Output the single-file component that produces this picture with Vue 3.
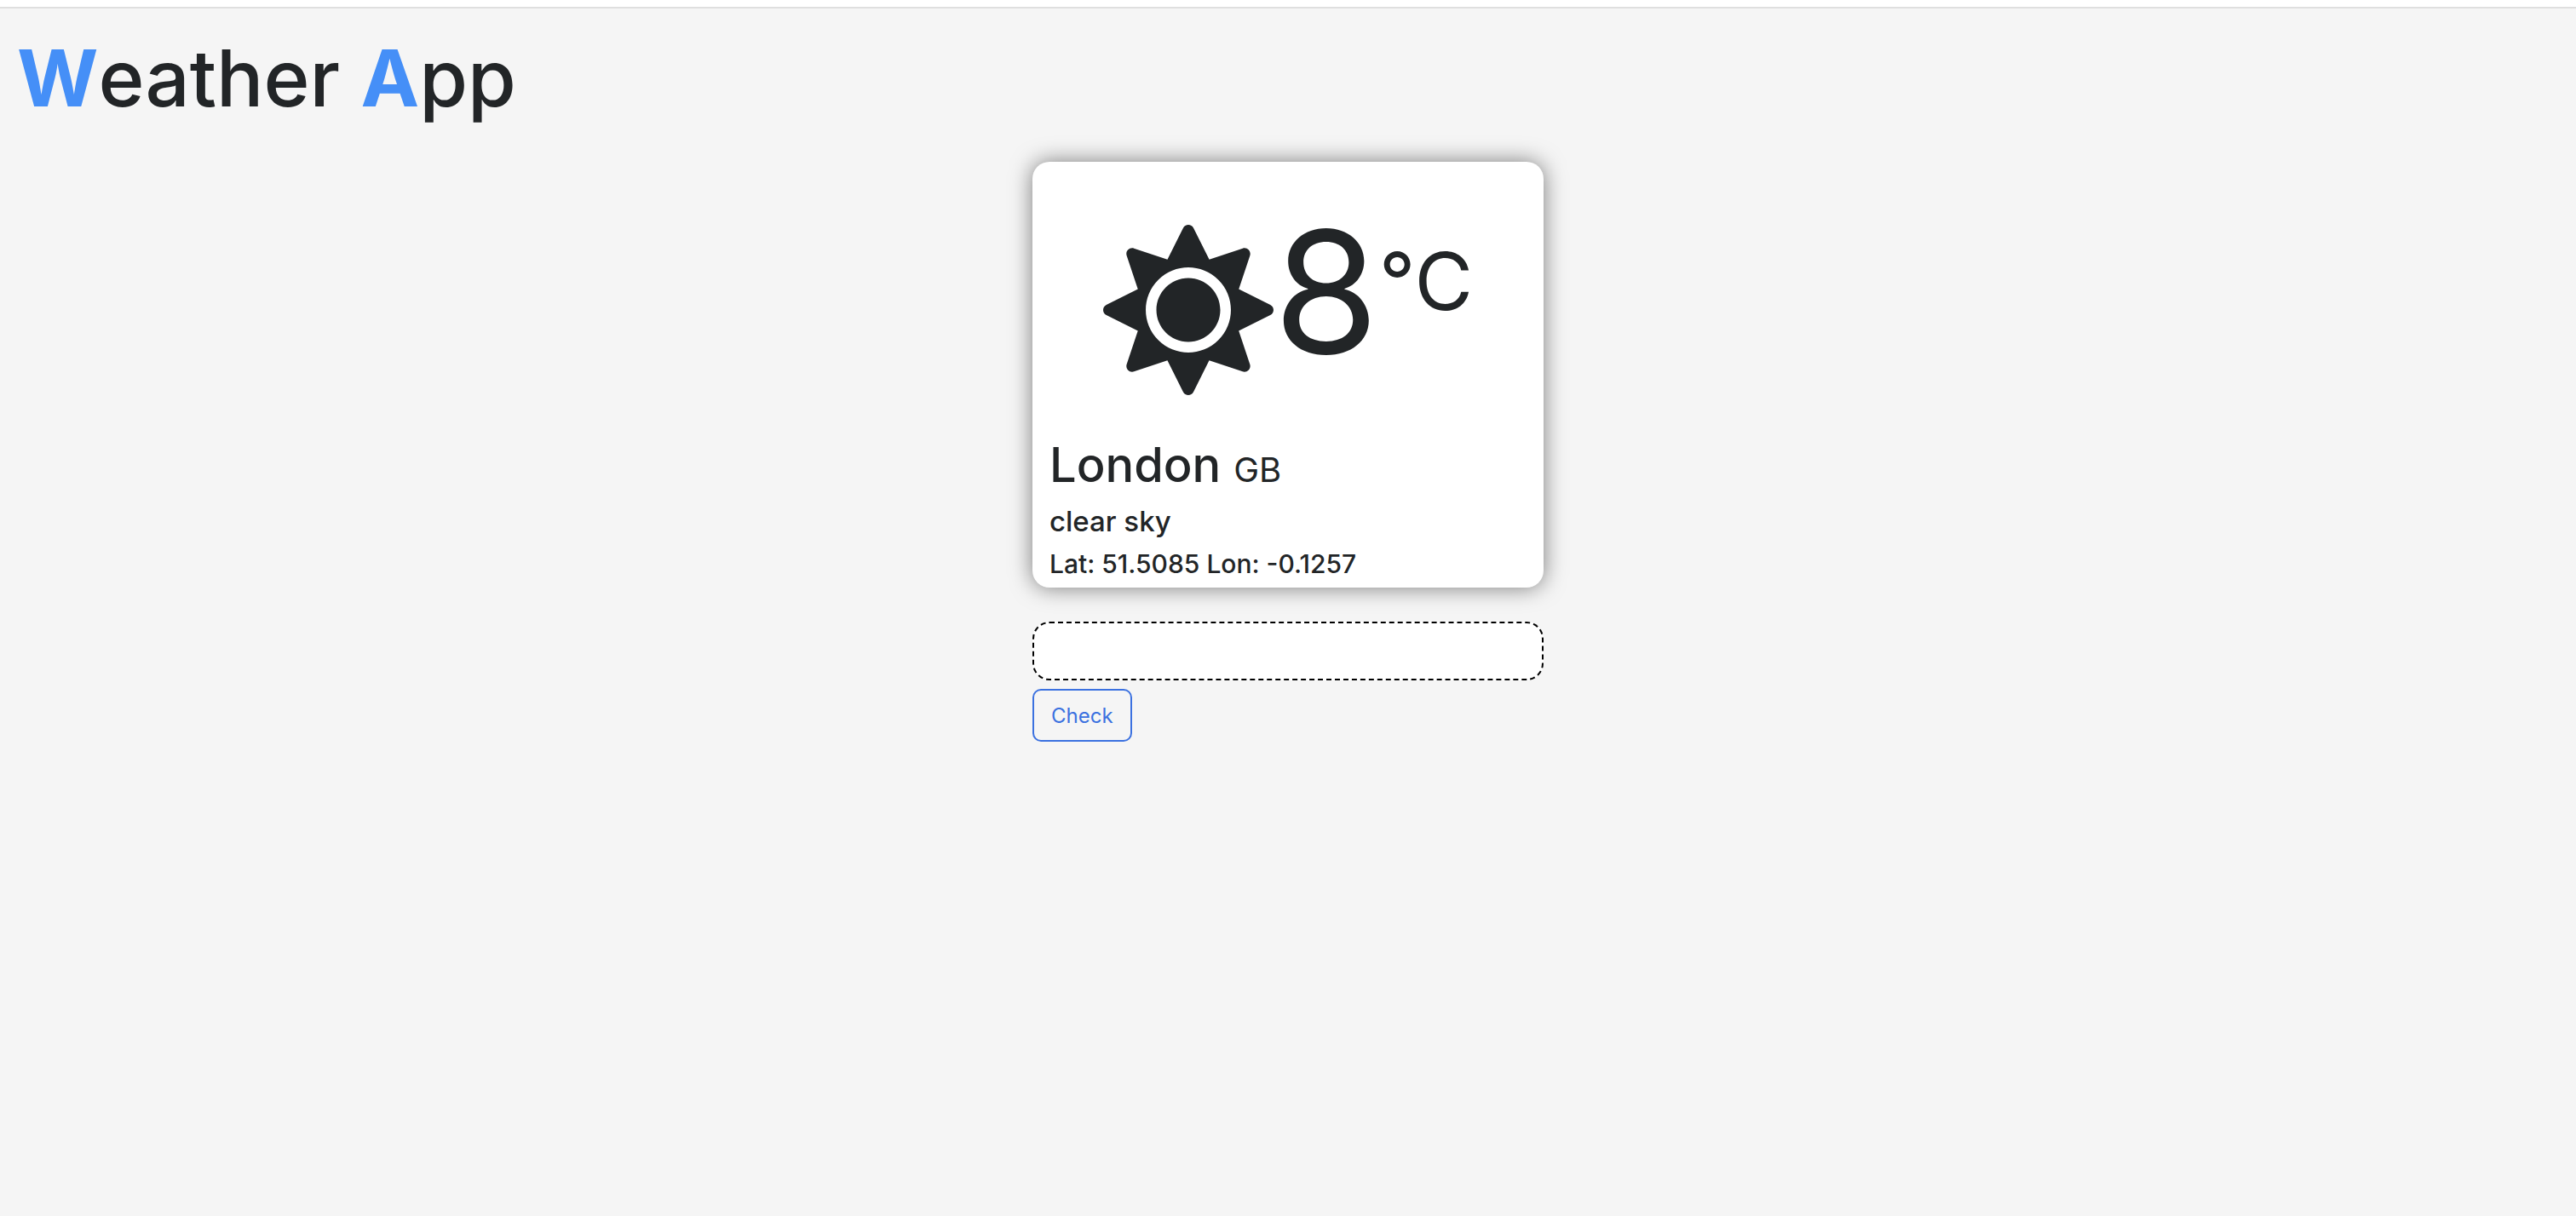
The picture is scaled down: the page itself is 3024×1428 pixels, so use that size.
<script setup>
import { ref } from 'vue'

const city = ref('')
const weather = {
  temperature: 8,
  city: 'London',
  country: 'GB',
  description: 'clear sky',
  lat: '51.5085',
  lon: '-0.1257',
}
</script>

<template>
  <div class="page">
    <header>
      <h1 class="title"><span>W</span>eather <span>A</span>pp</h1>
    </header>
    <main class="content">
      <section class="card">
        <div class="reading">
          <svg class="sun" viewBox="0 0 512 512" aria-hidden="true">
            <path
              fill="currentColor"
              d="M256 160c-52.9 0-96 43.1-96 96s43.1 96 96 96 96-43.1 96-96-43.1-96-96-96zm246.4 80.5l-94.7-47.3 33.5-100.4c4.5-13.6-8.4-26.5-21.9-21.9l-100.4 33.5-47.4-94.8c-6.4-12.8-24.6-12.8-31 0l-47.3 94.7L92.7 70.8c-13.6-4.5-26.5 8.4-21.9 21.9l33.5 100.4-94.7 47.4c-12.8 6.4-12.8 24.6 0 31l94.7 47.3-33.5 100.5c-4.5 13.6 8.4 26.5 21.9 21.9l100.4-33.5 47.3 94.7c6.4 12.8 24.6 12.8 31 0l47.3-94.7 100.4 33.5c13.6 4.5 26.5-8.4 21.9-21.9l-33.5-100.4 94.7-47.3c13-6.5 13-24.7.2-31.1zm-155.9 106c-49.9 49.9-131.1 49.9-181 0-49.9-49.9-49.9-131.1 0-181 49.9-49.9 131.1-49.9 181 0 49.9 49.9 49.9 131.1 0 181z"
            />
          </svg>
          <span class="degrees">{{ weather.temperature }}</span>
          <span class="unit">°C</span>
        </div>
        <h2 class="city">{{ weather.city }} <small>{{ weather.country }}</small></h2>
        <h3 class="description">{{ weather.description }}</h3>
        <h4 class="coords">Lat: {{ weather.lat }} Lon: {{ weather.lon }}</h4>
      </section>
      <form class="search" @submit.prevent>
        <input v-model="city" class="field" type="text" aria-label="City" />
        <button class="check" type="submit">Check</button>
      </form>
    </main>
  </div>
</template>

<style>
body {
  margin: 0;
  background: #f5f5f5;
}
</style>

<style scoped>
.page {
  box-sizing: border-box;
  min-height: 100vh;
  border-top: 8px solid #fff;
  box-shadow: inset 0 2px #dfdfdf;
  background: #f5f5f5;
  color: #222527;
  font-family: Inter, "Liberation Sans", sans-serif;
}

.title {
  margin: 0;
  padding: 24px 20px 0;
  font-size: 92px;
  font-weight: 500;
  line-height: 120px;
}

.title span {
  color: #458ff7;
  font-weight: 700;
}

.content {
  width: 600px;
  max-width: 100%;
  margin: 38px auto 0;
}

.card {
  box-sizing: border-box;
  padding: 54px 20px 10px;
  border-radius: 20px;
  background: #fff;
  box-shadow: 0 0 26px rgba(0, 0, 0, 0.5);
}

.reading {
  display: flex;
  justify-content: center;
  height: 266px;
}

.sun {
  width: 200px;
  height: 200px;
  margin-top: 20px;
}

.degrees {
  font-size: 200px;
  line-height: 196px;
}

.unit {
  font-size: 94px;
  line-height: 172px;
}

.city,
.description,
.coords {
  margin: 0;
  font-weight: 500;
}

.city {
  font-size: 56px;
  line-height: 72px;
}

.city small {
  font-size: 40px;
  font-weight: 400;
  line-height: 40px;
}

.description {
  margin-top: 8px;
  font-size: 33px;
  line-height: 44px;
}

.coords {
  margin-top: 10px;
  font-size: 30px;
  line-height: 36px;
}

.search {
  display: flex;
  flex-direction: column;
  align-items: flex-start;
  gap: 10px;
  margin-top: 40px;
}

.field {
  box-sizing: border-box;
  width: 100%;
  height: 69px;
  padding: 0 20px;
  border: 2px dashed #000;
  border-radius: 20px;
  background: #fff;
  font: inherit;
  font-size: 24px;
}

.check {
  height: 62px;
  padding: 0 20px;
  border: 2px solid #3b71e0;
  border-radius: 10px;
  background: transparent;
  color: #3b71e0;
  font: inherit;
  font-size: 24px;
}
</style>
